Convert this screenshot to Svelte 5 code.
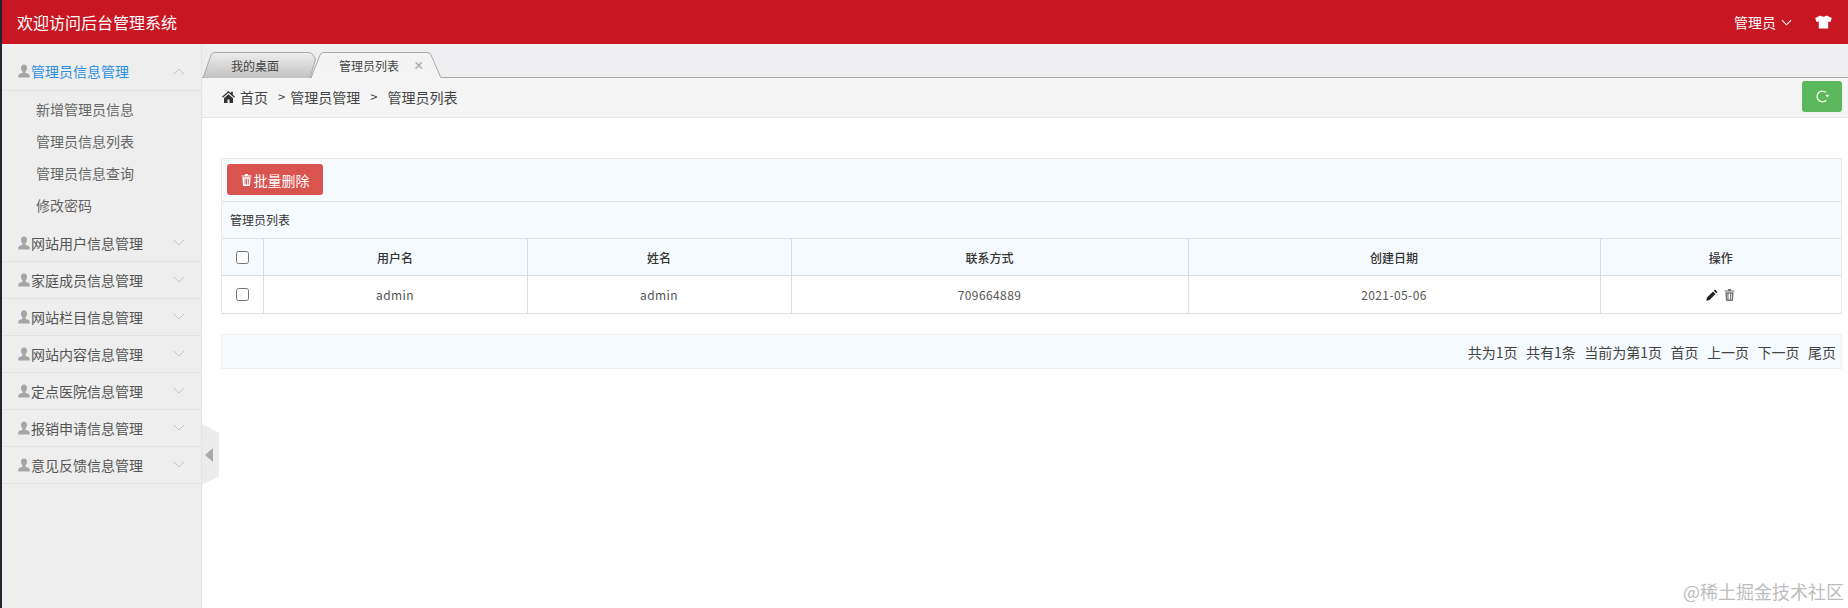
<script>
  const groups = ['网站用户信息管理','家庭成员信息管理','网站栏目信息管理','网站内容信息管理','定点医院信息管理','报销申请信息管理','意见反馈信息管理'];
  const subs = ['新增管理员信息','管理员信息列表','管理员信息查询','修改密码'];
</script>

{#snippet user()}
  <svg class="user" viewBox="0 0 12 14" width="12" height="14"><path d="M6 0.5C4 .5 3 2 3 3.8c0 1.6.7 3 1.5 3.8v1.2C3 9.6.3 10 .3 11.6V13.5h11.4v-1.9C11.700 10 9 9.600 7.500 8.800V7.600C8.300 6.800 9 5.400 9 3.800 9 2 8 .5 6 .5z" fill="#a5a5a5"/></svg>
{/snippet}
{#snippet chevron(up)}
  <svg class="chev" viewBox="0 0 12 7" width="12" height="7"><path d={up ? 'M1 6l5-5 5 5' : 'M1 1l5 5 5-5'} fill="none" stroke="#c4c4c4" stroke-width="1"/></svg>
{/snippet}
{#snippet trash(color)}
  <svg viewBox="0 0 12 13" width="11" height="12"><path d="M4.500 0h3l.6 1.500H11.500v1.300H.5V1.500h3.400zM1.500 3.600h9l-.6 8.400c0 .6-.4 1-1 1H3.100c-.6 0-1-.4-1-1zM4 5v6.500h.9V5zm2.500 0h-1v6.500h1zm1 0v6.500h.9V5z" fill={color} fill-rule="evenodd"/></svg>
{/snippet}

<div class="page">
  <header class="top">
    <span class="brand">欢迎访问后台管理系统</span>
    <div class="top-right">
      <span class="admin">管理员</span>
      <svg class="down" viewBox="0 0 12 7" width="11" height="7"><path d="M1 1l5 5 5-5" fill="none" stroke="#fff" stroke-width="1.200"/></svg>
      <svg class="shirt" viewBox="0 0 17 14" width="17" height="14"><path d="M5.500 .5C6.500 2 10.500 2 11.500 .5L16.800 3l-1.300 4-2.300-.6V13.500H3.800V6.400L1.500 7 .2 3z" fill="#fff"/></svg>
    </div>
  </header>

  <div class="body">
    <aside class="side">
      <div class="group open">{@render user()}<span class="gname">管理员信息管理</span>{@render chevron(true)}</div>
      <ul class="subs">
        {#each subs as s}<li>{s}</li>{/each}
      </ul>
      {#each groups as g}
        <div class="group">{@render user()}<span class="gname">{g}</span>{@render chevron(false)}</div>
      {/each}
    </aside>

    <button class="handle" aria-label="收起">
      <svg viewBox="0 0 8 14" width="8" height="14"><path d="M8 0v14L0 7z" fill="#a9a9a9"/></svg>
    </button>

    <main class="main">
      <div class="tabs">
        <div class="tab inactive">
          <svg class="tabshape" viewBox="0 0 113 26" preserveAspectRatio="none"><defs><linearGradient id="g1" x1="0" y1="0" x2="0" y2="1"><stop offset="0" stop-color="#eeeeee"/><stop offset="1" stop-color="#c2c2c2"/></linearGradient></defs><path d="M0 26L8 3Q9 .5 12 .5H105Q109 .5 110 3L112.500 7 107 26" fill="url(#g1)" stroke="#a9a9a9"/></svg>
          <span>我的桌面</span>
        </div>
        <div class="tab active">
          <svg class="tabshape" viewBox="0 0 131 26" preserveAspectRatio="none"><path d="M0 26L9 3Q10 .5 13 .5H116Q119 .5 120 3L130 26" fill="#f4f4f4" stroke="#a9a9a9"/><path d="M1 25.800H129.500" stroke="#f5f5f5" stroke-width="1.500"/></svg>
          <span>管理员列表</span><i class="close">×</i>
        </div>
      </div>

      <div class="crumbs">
        <svg class="home" viewBox="0 0 13 12" width="13" height="12"><path d="M6.500 0L0 5.800l.8.9L6.500 1.700l5.700 5 .8-.9L10.800 3.800V.8H9v1.400zM2 7.200V12h3.500V8.500h2V12H11V7.200L6.500 3.300z" fill="#333"/></svg>
        <span class="c first">首页</span>
        <span class="c sep">&gt;</span>
        <span class="c">管理员管理</span>
        <span class="c sep sep2">&gt;</span>
        <span class="c">管理员列表</span>
        <button class="refresh" aria-label="刷新">
          <svg viewBox="0 0 14 14" width="15" height="15"><path d="M10.300 3.300A5 5 0 1 0 10.500 10.500" fill="none" stroke="#eef8ee" stroke-width="1.300"/><path d="M9.600 5.400H13.400L11.500 8z" fill="#eef8ee"/></svg>
        </button>
      </div>

      <div class="content">
        <section class="panel">
          <div class="toolbar">
            <button class="del">{@render trash('#fff')}<span>批量删除</span></button>
          </div>
          <div class="ptitle">管理员列表</div>
          <table>
            <colgroup>
              <col class="c0"/><col class="c1"/><col class="c1"/><col class="c2"/><col class="c3"/><col/>
            </colgroup>
            <thead>
              <tr>
                <th><input type="checkbox"/></th>
                <th>用户名</th><th>姓名</th><th>联系方式</th><th>创建日期</th><th>操作</th>
              </tr>
            </thead>
            <tbody>
              <tr>
                <td><input type="checkbox"/></td>
                <td>admin</td><td>admin</td><td>709664889</td><td>2021-05-06</td>
                <td class="ops">
                  <svg viewBox="0 0 12 12" width="12" height="12"><path d="M9 .5l2.500 2.500-1.300 1.300-2.500-2.500zM7 2.500L9.500 5l-6 6-3.200.7.700-3.200z" fill="#222"/></svg>
                  {@render trash('#777')}
                </td>
              </tr>
            </tbody>
          </table>
        </section>

        <nav class="pager">
          <span>共为1页</span><span>共有1条</span><span>当前为第1页</span><span>首页</span><span>上一页</span><span>下一页</span><span>尾页</span>
        </nav>
      </div>
    </main>
  </div>

  <div class="mark">@稀土掘金技术社区</div>
</div>

<style>
  :global(body) { margin: 0; background: #fff; }
  .page {
    position: relative; width: 1848px; height: 608px; overflow: hidden;
    font-family: "Noto Sans CJK SC", "Liberation Sans", sans-serif; color: #333;
    font-size: 14px; display: flex; flex-direction: column;
    border-left: 2px solid #22242f; box-sizing: border-box;
  }
  .top {
    height: 44px; flex: none; background: #c81623; margin-left: -2px; color: #fff;
    display: flex; align-items: center; justify-content: space-between;
    padding: 0 16px 0 17px;
  }
  .brand { font-size: 16px; }
  .top-right { display: flex; align-items: center; }
  .admin { font-size: 14px; }
  .down { margin-left: 5px; }
  .shirt { margin-left: 23px; }

  .body { flex: 1; display: flex; position: relative; min-height: 0; }
  .side { width: 199px; flex: none; background: #eee; border-right: 1px solid #e4e4e4; }
  .group {
    height: 37px; display: flex; align-items: center; padding-left: 16px;
    border-bottom: 1px solid #e2e2e2; box-sizing: border-box; color: #555; position: relative;
  }
  .group.open { height: 47px; padding-top: 8px; color: #2c8fe0; }
  .user { flex: none; margin-right: 1px; }
  .gname { line-height: 1; }
  .chev { position: absolute; right: 16px; top: 14px; }
  .open .chev { top: 24px; }
  .subs { list-style: none; margin: 0; padding: 2px 0 0; height: 134px; box-sizing: border-box; }
  .subs li { height: 32px; line-height: 32px; padding-left: 34px; color: #666; }

  .handle {
    position: absolute; left: 200px; top: 380px; width: 17px; height: 61px; padding: 0 3px 0 0; border: 0;
    background: #ececec; display: flex; align-items: center; justify-content: center;
    clip-path: polygon(0 0, 100% 14%, 100% 86%, 0 100%);
  }

  .main { flex: 1; min-width: 0; display: flex; flex-direction: column; }
  .tabs {
    height: 34px; flex: none; background: #eeeef0; display: flex; align-items: flex-end;
    border-bottom: 1px solid #a9a9a9; box-sizing: border-box; padding-left: 1px; position: relative;
  }
  .tab { position: relative; height: 26px; font-size: 12px; display: flex; align-items: center; margin-bottom: -1px; color: #444; }
  .tabshape { position: absolute; inset: 0; width: 100%; height: 100%; }
  .tab span, .tab i { position: relative; }
  .inactive { width: 113px; padding-left: 28px; box-sizing: border-box; }
  .active { width: 131px; padding-left: 28px; box-sizing: border-box; margin-left: -5px; }
  .close { font-style: normal; color: #a5a5a5; font-size: 16px; margin-left: 15px; top: 1px; font-family: "Liberation Sans", sans-serif; }

  .crumbs {
    height: 40px; flex: none; background: #f5f5f5; border-bottom: 1px solid #e6e6e6;
    box-sizing: border-box; display: flex; align-items: center; padding: 0 0 2px 20px; position: relative;
  }
  .home { margin-right: 5px; }
  .c { color: #444; }
  .sep { margin: 0 5px 0 10px; font-size: 13px; }
  .sep2 { margin: 0 10px 0 10px; }
  .refresh {
    position: absolute; right: 6px; top: 3px; width: 40px; height: 31px; padding: 0; border: 0;
    border-radius: 3px; background: #5cb85c; display: flex; align-items: center; justify-content: center;
  }

  .content { padding: 40px 6px 0 19px; }
  .panel { border: 1px solid #e6e9ec; border-bottom: 0; background: #f5fafe; }
  .toolbar { height: 43px; padding: 5px 0 0 5px; box-sizing: border-box; border-bottom: 1px solid #dfe3e6; }
  .del {
    width: 96px; height: 31px; border: 0; border-radius: 3px; background: #d9534f; color: #fff; padding: 0;
    font: inherit; font-size: 14px; display: flex; align-items: center; justify-content: center; gap: 2px;
  }
  .ptitle { height: 37px; line-height: 36px; padding-left: 8px; font-size: 12px; color: #333; box-sizing: border-box; border-bottom: 1px solid #dfe3e6; }
  table { width: 100%; border-collapse: collapse; table-layout: fixed; font-size: 12px; }
  .c0 { width: 41px; }
  .c1 { width: 264px; }
  .c2 { width: 397px; }
  .c3 { width: 412px; }
  th, td { border: 1px solid #dcdcdc; text-align: center; padding: 0; vertical-align: middle; }
  th:first-child, td:first-child { border-left: 0; }
  th:last-child, td:last-child { border-right: 0; }
  thead th { border-top: 0; }
  th { height: 36px; font-weight: 500; background: #f5fafe; color: #333; }
  td { height: 37px; background: #fff; color: #555; letter-spacing: .4px; }
  input[type=checkbox] { width: 13px; height: 13px; display: block; margin: 0 auto; }
  .ops svg { vertical-align: middle; margin: 0 1.500px 2px; }

  .pager {
    margin-top: 20px; height: 35px; background: #f5fafe; border: 1px solid #eef2f5; box-sizing: border-box;
    display: flex; align-items: center; justify-content: flex-end; gap: 8.500px; padding-right: 5px; font-size: 14px; color: #444;
  }

  .mark { position: absolute; right: 4px; bottom: 5px; font-size: 18px; line-height: 1.2; color: #bdbdbd; }
</style>
